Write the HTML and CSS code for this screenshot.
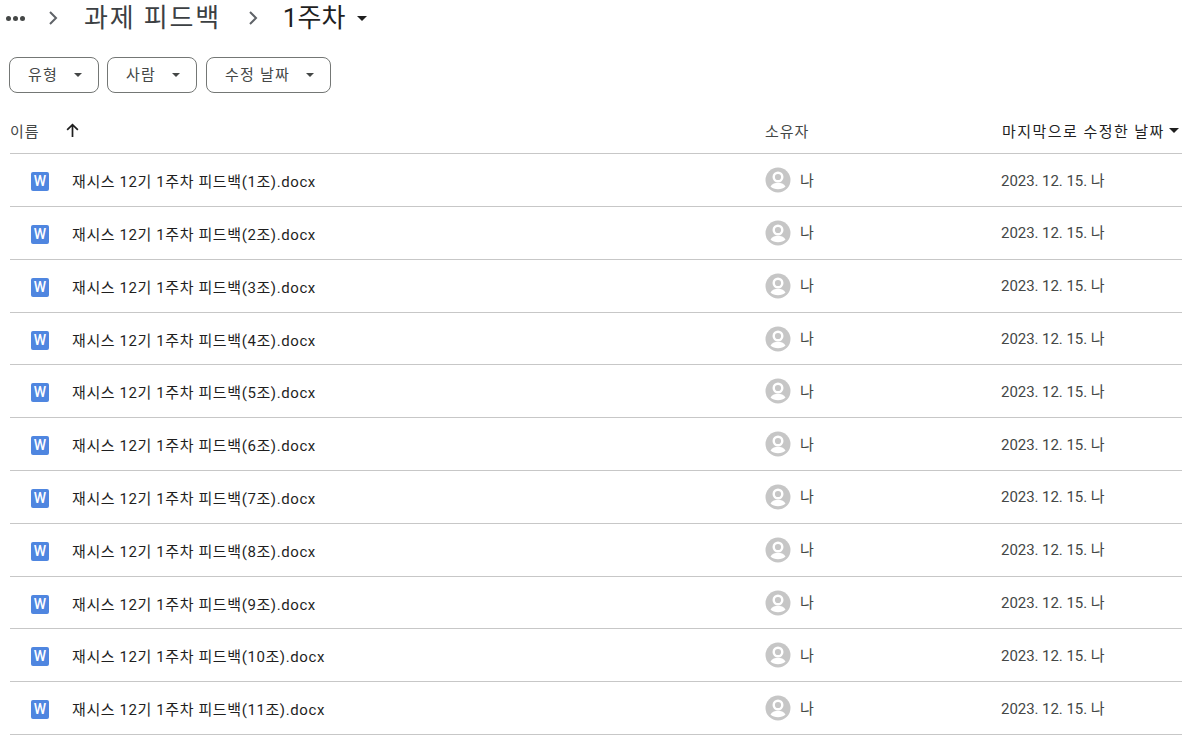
FILE: index.html
```html
<!DOCTYPE html>
<html lang="ko">
<head>
    <meta charset="UTF-8">
    <meta name="viewport" content="width=device-width, initial-scale=1.0">
    <title>1주차 - Drive</title>
    <link rel="stylesheet" href="styles.css">
</head>
<body>

    <nav class="breadcrumb">
        <span class="dots"><i></i><i></i><i></i></span>
        <svg class="chevron chevron-first" viewBox="0 0 10 16"><path d="M2 2l6 6-6 6" fill="none" stroke="#5f6368" stroke-width="2"/></svg>
        <span class="crumb">과제 피드백</span>
        <svg class="chevron chevron-second" viewBox="0 0 10 16"><path d="M2 2l6 6-6 6" fill="none" stroke="#5f6368" stroke-width="2"/></svg>
        <span class="crumb crumb-current">1주차</span>
        <span class="caret caret-crumb"></span>
    </nav>

    <div class="filters">
        <button class="chip chip-type">유형<span class="caret"></span></button>
        <button class="chip chip-people">사람<span class="caret"></span></button>
        <button class="chip chip-date">수정 날짜<span class="caret"></span></button>
    </div>

    <div class="list">
        <div class="row head">
            <div class="name-head">이름
                <svg class="arrow" viewBox="0 0 14 14"><path d="M7 13V2M2 6.500l5-5 5 5" fill="none" stroke="#1f1f1f" stroke-width="1.600"/></svg>
            </div>
            <div>소유자</div>
            <div class="date-head">마지막으로 수정한 날짜<span class="caret"></span></div>
        </div>
        <div id="rows"></div>
    </div>

    <script>
        const rowsEl = document.getElementById('rows');
        for (let i = 1; i <= 11; i++) {
            const row = document.createElement('div');
            row.className = 'row';
            row.innerHTML = `
                <div class="file">
                    <span class="word-icon">W</span>
                    <span class="file-name">재시스 12기 1주차 피드백(${i}조).docx</span>
                </div>
                <div class="owner">
                    <svg class="avatar" viewBox="0 0 26 26">
                        <circle cx="13" cy="13" r="12.500" fill="#c6c6c6"/>
                        <circle cx="13" cy="10" r="4.300" fill="none" stroke="#fff" stroke-width="2.400"/>
                        <path d="M5.500 19.500c1.500-2.800 4.600-3.700 7.500-3.700s6 .9 7.500 3.700c-1.800 1.800-4.500 2.800-7.500 2.800s-5.700-1-7.500-2.800z" fill="#fff"/>
                    </svg>
                    <span class="owner-name">나</span>
                </div>
                <div class="date">2023. 12. 15. 나</div>`;
            rowsEl.appendChild(row);
        }
    </script>

</body>
</html>
```

FILE: styles.css
```css
body {
    font-family: Roboto, "Noto Sans CJK KR", sans-serif;
    background-color: #fff;
    color: #1f1f1f;
    margin: 0;
    height: 740px;
    overflow: hidden;
}

.breadcrumb {
    display: flex;
    align-items: center;
    height: 36px;
    padding-left: 6px;
    font-size: 26px;
    color: #3c4043;
}

.dots {
    display: flex;
    gap: 2px;
}

.dots i {
    width: 5px;
    height: 5px;
    border-radius: 50%;
    background-color: #444746;
}

.chevron {
    width: 10px;
    height: 16px;
}

.chevron-first {
    margin-left: 23px;
}

.chevron-second {
    margin-left: 27px;
}

.crumb {
    margin-left: 26px;
    padding-bottom: 6px;
    letter-spacing: 1.800px;
}

.crumb-current {
    margin-left: 25px;
    color: #1f1f1f;
    letter-spacing: 0;
}

.caret {
    display: inline-block;
    border-left: 4px solid transparent;
    border-right: 4px solid transparent;
    border-top: 4px solid #444746;
}

.caret-crumb {
    margin-left: 12px;
    border-left-width: 5px;
    border-right-width: 5px;
    border-top-width: 5px;
    border-top-color: #1f1f1f;
}

.filters {
    display: flex;
    gap: 8px;
    padding: 21px 0 0 9px;
}

.chip {
    display: flex;
    align-items: center;
    justify-content: space-between;
    height: 36px;
    padding: 0 16px 3px 18px;
    border: 1px solid #747775;
    border-radius: 8px;
    background-color: #fff;
    color: #444746;
    font-family: inherit;
    font-size: 15px;
    letter-spacing: 1.200px;
}

.chip .caret {
    margin-top: 3px;
}

.chip-type,
.chip-people {
    width: 90px;
}

.chip-date {
    width: 125px;
    margin-left: 1px;
}

.list {
    margin: 19px 0 0 10px;
}

.row {
    display: grid;
    grid-template-columns: 755px 236px 1fr;
    align-items: center;
    height: 52.800px;
    box-sizing: border-box;
    border-bottom: 1px solid #c7c7c7;
    font-size: 15px;
    color: #444746;
}

.head {
    height: 42.300px;
    padding-bottom: 5px;
    letter-spacing: 1px;
}

.name-head {
    display: flex;
    align-items: center;
    gap: 25px;
}

.arrow {
    width: 15px;
    height: 15px;
}

.date-head {
    display: flex;
    align-items: center;
    gap: 4px;
    padding-left: 1px;
    color: #1f1f1f;
    letter-spacing: 1.450px;
}

.date-head .caret {
    border-left-width: 5px;
    border-right-width: 5px;
    border-top-width: 5px;
    border-top-color: #1f1f1f;
}

.file {
    display: flex;
    align-items: center;
    padding-left: 21px;
    color: #1f1f1f;
}

.file-name {
    padding-top: 1px;
    letter-spacing: 0.600px;
}

.word-icon {
    width: 18px;
    height: 19px;
    margin: 3px 23px 0 0;
    border-radius: 2px;
    background-color: #4f86e0;
    color: #fff;
    font-size: 14px;
    font-weight: 500;
    line-height: 19px;
    text-align: center;
}

.owner {
    display: flex;
    align-items: center;
    gap: 9px;
}

.owner-name {
    padding-bottom: 2px;
}

.date {
    padding-bottom: 2px;
    letter-spacing: -0.050px;
}

.avatar {
    width: 26px;
    height: 26px;
}
```
